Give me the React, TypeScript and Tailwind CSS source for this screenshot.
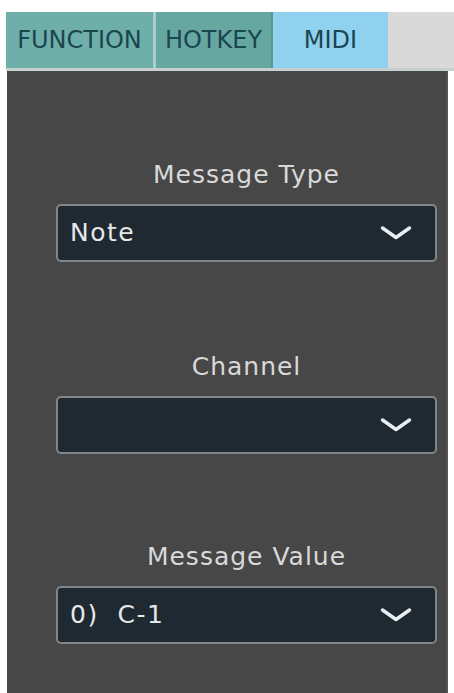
import React from "react";

function Chevron() {
  return (
    <svg width="32" height="16" viewBox="0 0 32 16" fill="none">
      <path d="M2.5 3 L16 12.5 L29.5 3" stroke="#e9eef0" strokeWidth="3.5" strokeLinecap="round" strokeLinejoin="round" />
    </svg>
  );
}

function Field({ label, value, mt }: { label: string; value: string; mt: string }) {
  return (
    <div className={`flex flex-col ${mt}`}>
      <div className="h-[30px] leading-[30px] text-center text-[25px] tracking-[1px] text-[#d9d9d9]">{label}</div>
      <div className="mt-[14px] h-[58px] rounded-[5px] border-2 border-[#7f8789] bg-[#1f2931] flex items-center justify-between pl-[12px] pr-[23px]">
        <span className="text-[25px] tracking-[1.5px] text-[#e6e8ea] whitespace-pre">{value}</span>
        <Chevron />
      </div>
    </div>
  );
}

export default function App() {
  return (
    <div
      className="w-[454px] h-[693px] bg-white overflow-hidden flex flex-col"
      style={{ fontFamily: '"DejaVu Sans", Verdana, sans-serif' }}
    >
      <div className="mt-[12px] ml-[6px] flex h-[56px] text-[24px] text-[#1a4650]">
        <div className="w-[147px] bg-[#6eafa9] flex items-center justify-center">FUNCTION</div>
        <div className="w-[3px] bg-[#a9cfcb]" />
        <div className="w-[117px] bg-[#67a7a1] flex items-center justify-center border-r-2 border-[#5d9893]">HOTKEY</div>
        <div className="w-[115px] bg-[#8fd1ee] flex items-center justify-center">MIDI</div>
        <div className="flex-1 bg-[#d9d9d9]" />
      </div>
      <div className="ml-[6px] h-[3px] bg-[#c6d0d0]" />
      <div className="ml-[7px] w-[441px] flex-1 bg-[#474747] border-r-2 border-[#555555] flex flex-col pl-[49px] pr-[9px]">
        <Field label="Message Type" value="Note" mt="mt-[89px]" />
        <Field label="Channel" value="" mt="mt-[90px]" />
        <Field label="Message Value" value="0)  C-1" mt="mt-[88px]" />
      </div>
    </div>
  );
}
